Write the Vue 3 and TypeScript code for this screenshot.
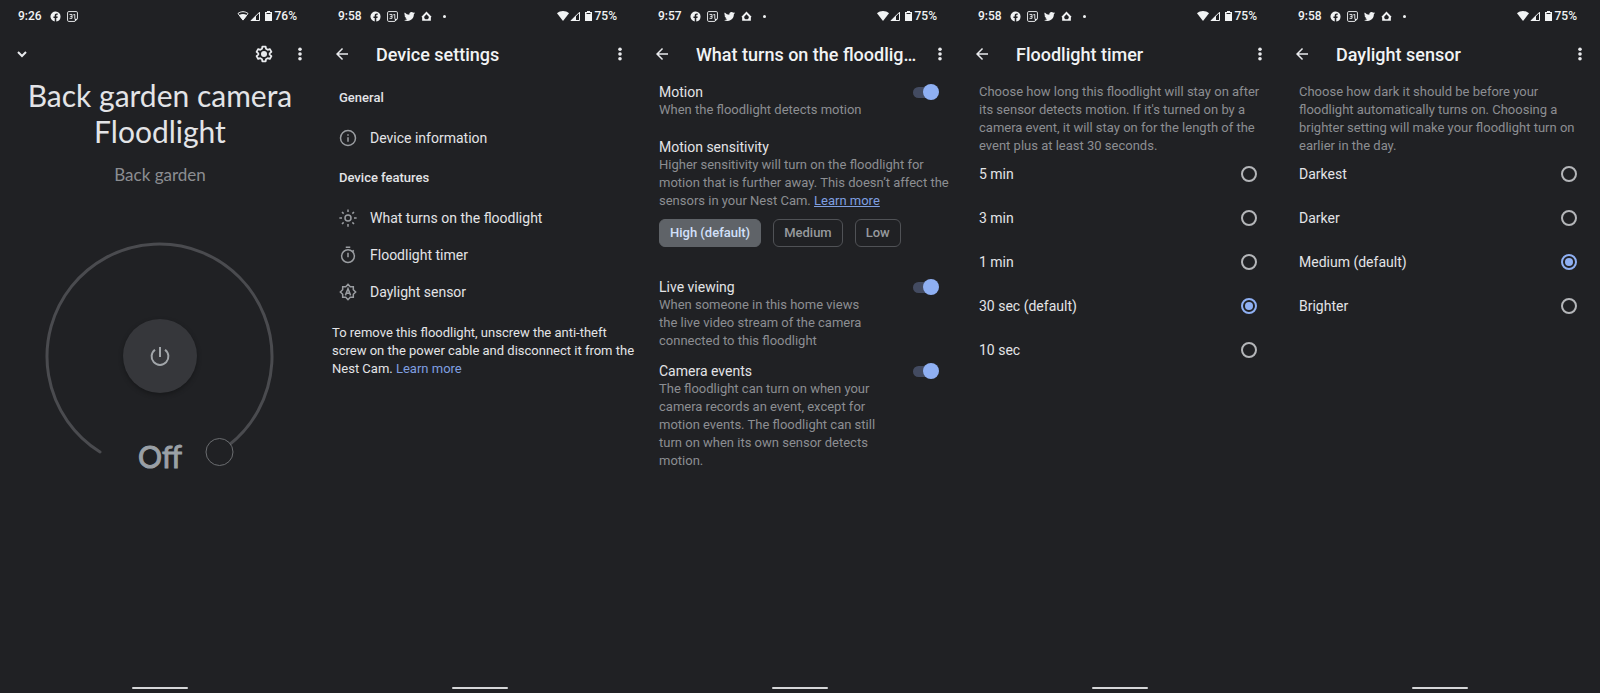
<script setup lang="ts">
import { ref } from 'vue'

type ScreenId = 'dial' | 'settings' | 'triggers' | 'timer' | 'daylight'

interface Screen {
  id: ScreenId
  time: string
  battery: string
  title?: string
  weakWifi?: boolean
}

const screens: Screen[] = [
  { id: 'dial', time: '9:26', battery: '76%', weakWifi: true },
  { id: 'settings', time: '9:58', battery: '75%', title: 'Device settings' },
  { id: 'triggers', time: '9:57', battery: '75%', title: 'What turns on the floodlight' },
  { id: 'timer', time: '9:58', battery: '75%', title: 'Floodlight timer' },
  { id: 'daylight', time: '9:58', battery: '75%', title: 'Daylight sensor' },
]

const brightness = ref(0)
const motion = ref(true)
const liveViewing = ref(true)
const cameraEvents = ref(true)

const sensitivities = ['High (default)', 'Medium', 'Low']
const sensitivity = ref('High (default)')

const timers = ['5 min', '3 min', '1 min', '30 sec (default)', '10 sec']
const timer = ref('30 sec (default)')

const levels = ['Darkest', 'Darker', 'Medium (default)', 'Brighter']
const level = ref('Medium (default)')
</script>

<template>
  <main class="board">
    <section v-for="s in screens" :key="s.id" class="screen">
      <div class="status">
        <span class="clock">{{ s.time }}</span>
        <span class="notices">
          <svg class="notice" viewBox="0 0 24 24" aria-hidden="true">
            <path fill="currentColor" d="M23 12a11 11 0 1 0-12.7 10.9v-7.7H7.500V12h2.800V9.600c0-2.800 1.700-4.300 4.200-4.300 1.200 0 2.400.2 2.400.2v2.700h-1.400c-1.400 0-1.800.8-1.800 1.700V12h3.100l-.5 3.200h-2.600v7.700A11 11 0 0 0 23 12z" />
          </svg>
          <svg class="notice" viewBox="0 0 24 24" aria-hidden="true">
            <path fill="none" stroke="currentColor" stroke-width="2" d="M4 1.200h16a2.800 2.800 0 0 1 2.800 2.800v13l-5.800 5.800H4A2.800 2.800 0 0 1 1.200 20V4A2.800 2.800 0 0 1 4 1.200z" />
            <path fill="currentColor" d="M23 17h-6v6z" />
            <path fill="none" stroke="currentColor" stroke-width="2" d="M5.500 7.500h5.500v8.500H5.500M7 11.800h4M13.500 8.500L17 7.500V17" />
          </svg>
          <template v-if="s.id !== 'dial'">
            <svg class="notice" viewBox="0 0 24 24" aria-hidden="true">
              <path fill="currentColor" d="M24 4.600a10 10 0 0 1-2.800.8 5 5 0 0 0 2.100-2.700 10 10 0 0 1-3.100 1.200 4.900 4.900 0 0 0-8.400 4.500A14 14 0 0 1 1.700 3.100a4.900 4.900 0 0 0 1.500 6.600 5 5 0 0 1-2.200-.6 4.900 4.900 0 0 0 3.900 4.900 5 5 0 0 1-2.200.1 4.900 4.900 0 0 0 4.600 3.400A9.900 9.900 0 0 1 0 19.500a14 14 0 0 0 21.500-12.400A10 10 0 0 0 24 4.600z" />
            </svg>
            <svg class="notice" viewBox="0 0 24 24" aria-hidden="true">
              <path fill="currentColor" fill-rule="evenodd" d="M12 1L23 12.500 21.500 14V21.500H2.500V14L1 12.500zM12 7L7 12.500V14a5 5 0 0 0 2.500 4h5A5 5 0 0 0 17 14v-1.500z" />
            </svg>
            <span class="more-dot"></span>
          </template>
        </span>
        <span class="signals">
          <svg class="wifi" viewBox="0 0 24 20" aria-hidden="true">
            <path v-if="!s.weakWifi" fill="currentColor" d="M12 20L0 4.500C3.500 1.700 7.500 0 12 0s8.500 1.700 12 4.500z" />
            <template v-else>
              <path fill="none" stroke="currentColor" stroke-width="2" d="M12 18L2 5c3-2.400 6.500-3.600 10-3.600S19 2.600 22 5z" />
              <path fill="currentColor" d="M12 19L4 8.500c5-3.500 11-3.500 16 0z" />
            </template>
          </svg>
          <svg class="cell" viewBox="0 0 20 20" aria-hidden="true">
            <path fill="none" stroke="currentColor" stroke-width="2" d="M2.500 19H19V2.500z" />
            <path fill="currentColor" d="M1 20h11V9z" />
          </svg>
          <svg class="battery" viewBox="0 0 14 20" aria-hidden="true">
            <path fill="currentColor" d="M4 0h6v2h4v18H0V2h4z" />
            <path fill="#202124" d="M3 4h8v2H3z" />
          </svg>
          <span>{{ s.battery }}</span>
        </span>
      </div>

      <header class="bar">
        <button class="icon-button" type="button" :aria-label="s.title ? 'Back' : 'Close'">
          <svg v-if="s.title" viewBox="0 0 24 24" class="arrow" aria-hidden="true">
            <path fill="currentColor" d="M20 11H7.830l5.590-5.590L12 4l-8 8 8 8 1.410-1.410L7.830 13H20v-2z" />
          </svg>
          <svg v-else viewBox="0 0 12 12" class="chevron" aria-hidden="true">
            <path fill="none" stroke="currentColor" stroke-width="2" d="M2 4l4 4 4-4" />
          </svg>
        </button>
        <h1 v-if="s.title" class="title">{{ s.title }}</h1>
        <button v-else class="icon-button gear" type="button" aria-label="Settings">
          <svg viewBox="0 0 24 24" aria-hidden="true">
            <path fill="none" stroke="currentColor" stroke-width="2.400" stroke-linejoin="round" d="M9.800 2.200h4.400l.5 2.900 2.200 1.300 2.800-1 2.200 3.800-2.300 1.900v1.800l2.300 1.900-2.200 3.800-2.800-1-2.200 1.300-.5 2.900H9.800l-.5-2.900-2.200-1.300-2.800 1-2.200-3.800 2.300-1.900v-1.800L2.100 9.200l2.200-3.800 2.800 1 2.200-1.300z" />
            <circle cx="12" cy="12" r="4" fill="currentColor" />
          </svg>
        </button>
        <button class="icon-button dots" type="button" aria-label="More options">
          <svg viewBox="0 0 4 14" aria-hidden="true">
            <circle cx="2" cy="2.200" r="1.800" fill="currentColor" />
            <circle cx="2" cy="7" r="1.800" fill="currentColor" />
            <circle cx="2" cy="11.800" r="1.800" fill="currentColor" />
          </svg>
        </button>
      </header>

      <div v-if="s.id === 'dial'" class="dial-page">
        <h1 class="device">Back garden camera Floodlight</h1>
        <p class="room">Back garden</p>
        <div class="dial">
          <svg class="track" viewBox="0 0 230 228" aria-hidden="true">
            <path fill="none" stroke="#4a4b4f" stroke-width="3" stroke-linecap="round" d="M55 210A112.500 112.500 0 1 1 184 203" />
            <circle cx="174.500" cy="210" r="13.500" fill="#202124" stroke="#6b6d70" stroke-width="1" />
          </svg>
          <button class="power" type="button" aria-label="Turn on">
            <svg viewBox="0 0 20 20" aria-hidden="true">
              <path fill="none" stroke="currentColor" stroke-width="2" d="M10 1v10M5 3.800a8.400 8.400 0 1 0 10 0" />
            </svg>
          </button>
          <output class="state">{{ brightness > 0 ? brightness + '%' : 'Off' }}</output>
          <input v-model.number="brightness" class="slider" type="range" min="0" max="100" aria-label="Brightness" />
        </div>
      </div>

      <div v-else-if="s.id === 'settings'" class="settings">
        <h2 class="group">General</h2>
        <a class="item" href="#information">
          <svg viewBox="0 0 24 24" aria-hidden="true">
            <circle cx="12" cy="12" r="10" fill="none" stroke="currentColor" stroke-width="2" />
            <path fill="currentColor" d="M11 7h2v2h-2zM11 11h2v6h-2z" />
          </svg>
          Device information
        </a>
        <h2 class="group">Device features</h2>
        <a class="item" href="#triggers">
          <svg viewBox="0 0 24 24" aria-hidden="true">
            <g fill="none" stroke="currentColor" stroke-width="2">
              <circle cx="12" cy="12" r="4" />
              <path d="M12 0.500v3.500M12 20v3.500M0.500 12h3.500M20 12h3.500M4 4l2.200 2.200M17.800 17.800L20 20M20 4l-2.200 2.200M6.200 17.800L4 20" />
            </g>
          </svg>
          What turns on the floodlight
        </a>
        <a class="item" href="#timer">
          <svg viewBox="0 0 24 24" aria-hidden="true">
            <g fill="none" stroke="currentColor" stroke-width="2">
              <circle cx="12" cy="13.500" r="8.500" />
              <path d="M9 1.500h6M12 9v6M18 7.500l1.700-1.700" />
            </g>
          </svg>
          Floodlight timer
        </a>
        <a class="item" href="#daylight">
          <svg viewBox="0 0 24 24" aria-hidden="true">
            <g fill="none" stroke="currentColor" stroke-width="2">
              <path d="M12 1.800L15 4.900h4.100V9l3.100 3-3.100 3v4.100H15l-3 3.100-3-3.100H4.900V15l-3.100-3 3.100-3V4.900H9z" />
              <path d="M8.500 16.500L12 7.500l3.500 9M9.800 13.800h4.400" />
            </g>
          </svg>
          Daylight sensor
        </a>
        <p class="removal">
          To remove this floodlight, unscrew the anti-theft screw on the power cable and disconnect it from the Nest Cam.
          <a href="#removal">Learn more</a>
        </p>
      </div>

      <div v-else-if="s.id === 'triggers'" class="triggers">
        <div class="trigger">
          <div class="copy">
            <label class="name" for="motion">Motion</label>
            <p class="hint">When the floodlight detects motion</p>
          </div>
          <input id="motion" v-model="motion" class="switch" type="checkbox" />
        </div>
        <fieldset class="sensitivity">
          <legend class="name">Motion sensitivity</legend>
          <p class="hint">
            Higher sensitivity will turn on the floodlight for motion that is further away. This doesn’t affect the
            sensors in your Nest Cam. <a class="underlined" href="#sensitivity">Learn more</a>
          </p>
          <div class="chips">
            <button
              v-for="option in sensitivities"
              :key="option"
              type="button"
              class="chip"
              :class="{ chosen: option === sensitivity }"
              :aria-pressed="option === sensitivity"
              @click="sensitivity = option"
            >{{ option }}</button>
          </div>
        </fieldset>
        <div class="trigger">
          <div class="copy">
            <label class="name" for="live">Live viewing</label>
            <p class="hint">When someone in this home views the live video stream of the camera connected to this floodlight</p>
          </div>
          <input id="live" v-model="liveViewing" class="switch" type="checkbox" />
        </div>
        <div class="trigger events">
          <div class="copy">
            <label class="name" for="events">Camera events</label>
            <p class="hint">The floodlight can turn on when your camera records an event, except for motion events. The floodlight can still turn on when its own sensor detects motion.</p>
          </div>
          <input id="events" v-model="cameraEvents" class="switch" type="checkbox" />
        </div>
      </div>

      <div v-else-if="s.id === 'timer'" class="choices">
        <p class="hint">Choose how long this floodlight will stay on after its sensor detects motion. If it's turned on by a camera event, it will stay on for the length of the event plus at least 30 seconds.</p>
        <div class="options">
          <label v-for="option in timers" :key="option" class="option">
            {{ option }}
            <input v-model="timer" class="radio" type="radio" name="timer" :value="option" />
          </label>
        </div>
      </div>

      <div v-else class="choices">
        <p class="hint">Choose how dark it should be before your floodlight automatically turns on. Choosing a brighter setting will make your floodlight turn on earlier in the day.</p>
        <div class="options">
          <label v-for="option in levels" :key="option" class="option">
            {{ option }}
            <input v-model="level" class="radio" type="radio" name="level" :value="option" />
          </label>
        </div>
      </div>

      <div class="home-bar"></div>
    </section>
  </main>
</template>

<style>
body {
  margin: 0;
  background: #202124;
}
</style>

<style scoped>
.board {
  display: grid;
  grid-template-columns: repeat(5, 1fr);
  min-height: 100vh;
  background: #202124;
  color: #e3e4e7;
  font-family: Roboto, 'Liberation Sans', sans-serif;
  font-size: 14px;
  line-height: 18px;
}

.screen {
  display: flex;
  flex-direction: column;
  min-width: 0;
}

h1,
h2,
p {
  margin: 0;
}

a {
  color: #7f9fe0;
  text-decoration: none;
}

/* status strip */
.status {
  display: flex;
  align-items: center;
  height: 32px;
  padding: 0 23px 0 18px;
  color: #f1f3f4;
  font-size: 12px;
  font-weight: 500;
}

.clock {
  width: 32px;
}

.notices {
  display: flex;
  flex: 1;
  align-items: center;
  gap: 6px;
}

.notice {
  width: 11px;
  height: 11px;
}

.more-dot {
  width: 3px;
  height: 3px;
  margin-left: 5px;
  border-radius: 50%;
  background: currentColor;
}

.signals {
  display: flex;
  align-items: center;
  gap: 1px;
}

.wifi {
  width: 12px;
  height: 10px;
}

.cell {
  width: 10px;
  height: 10px;
}

.battery {
  width: 7px;
  height: 10px;
  margin: 0 2px 0 4px;
}

/* app bar */
.bar {
  display: flex;
  align-items: center;
  height: 44px;
  padding: 0 18px 0 13px;
}

.icon-button {
  display: flex;
  flex: none;
  align-items: center;
  padding: 0;
  border: 0;
  background: none;
  color: #e8eaed;
  cursor: pointer;
}

.arrow {
  width: 18px;
  height: 18px;
  margin-right: 25px;
}

.chevron {
  width: 12px;
  height: 12px;
  margin-left: 3px;
}

.gear {
  margin: 0 25px 0 auto;
}

.gear svg {
  width: 18px;
  height: 18px;
}

.title {
  flex: 1;
  overflow: hidden;
  margin-right: 20px;
  padding-top: 2px;
  color: #f1f3f4;
  font-size: 18px;
  font-weight: 500;
  line-height: 24px;
  text-overflow: ellipsis;
  white-space: nowrap;
}

.dots svg {
  width: 4px;
  height: 14px;
}

/* dial */
.dial-page {
  display: flex;
  flex-direction: column;
  align-items: center;
  font-family: Lato, Roboto, sans-serif;
  text-align: center;
}

.device {
  max-width: 290px;
  margin-top: 1px;
  font-size: 30px;
  font-weight: 400;
  line-height: 36px;
}

.room {
  margin-top: 16px;
  color: #8b8d91;
  font-size: 17px;
  line-height: 20px;
}

.dial {
  display: grid;
  grid-template-rows: 228px;
  justify-items: center;
  margin-top: 57px;
}

.dial > * {
  grid-area: 1 / 1;
}

.track {
  width: 230px;
  height: 228px;
}

.power {
  display: flex;
  align-items: center;
  justify-content: center;
  align-self: start;
  width: 74px;
  height: 74px;
  margin-top: 77px;
  padding: 0;
  border: 0;
  border-radius: 50%;
  background: #36373b;
  box-shadow: 0 2px 4px #17181a;
  color: #a2a6aa;
  cursor: pointer;
}

.power svg {
  width: 20px;
  height: 20px;
}

.state {
  align-self: end;
  color: #9aa0a6;
  font-size: 30px;
  line-height: 28px;
  -webkit-text-stroke: 1px #9aa0a6;
}

.slider {
  align-self: end;
  width: 120px;
  margin: 0;
  opacity: 0;
}

/* device settings */
.settings {
  padding: 13px 4px 0 12px;
}

.group {
  padding: 0 7px;
  font-size: 13px;
  font-weight: 500;
  line-height: 18px;
}

.item {
  display: flex;
  align-items: center;
  gap: 13px;
  height: 37px;
  padding: 0 7px;
  color: #e3e4e7;
  font-size: 14px;
}

.item svg {
  width: 18px;
  height: 18px;
  color: #9a9da1;
}

.group + .item {
  margin-top: 12px;
}

.item + .group {
  margin-top: 13px;
}

.removal {
  margin-top: 14px;
  font-size: 13px;
}

/* triggers */
.triggers {
  padding: 7px 4px 0 19px;
}

.trigger {
  display: flex;
  align-items: flex-start;
  justify-content: space-between;
}

.trigger.events {
  margin-top: 12px;
}

.copy {
  max-width: 218px;
}

.name {
  display: block;
  padding: 0;
  font-size: 14px;
  line-height: 18px;
}

.hint {
  color: #8c8e92;
  font-size: 13px;
  line-height: 18px;
}

.sensitivity {
  margin: 19px 0 31px;
  padding: 0;
  border: 0;
}

.underlined {
  text-decoration: underline;
}

.chips {
  display: flex;
  gap: 12px;
  margin-top: 9px;
}

.chip {
  height: 28px;
  padding: 0 10px;
  border: 1px solid #505256;
  border-radius: 6px;
  background: none;
  color: #96999d;
  font: 500 13px/18px Roboto, 'Liberation Sans', sans-serif;
  cursor: pointer;
}

.chip.chosen {
  border-color: #5f6368;
  background: #5f6368;
  color: #d2e0fa;
}

.switch {
  display: grid;
  align-items: center;
  justify-items: end;
  width: 26px;
  height: 16px;
  margin: 1px 17px 0 0;
  appearance: none;
  cursor: pointer;
}

.switch::before,
.switch::after {
  grid-area: 1 / 1;
  content: '';
}

.switch::before {
  justify-self: start;
  width: 22px;
  height: 11px;
  border-radius: 6px;
  background: #434b61;
}

.switch::after {
  width: 16px;
  height: 16px;
  border-radius: 50%;
  background: #8fb0f3;
}

.switch:not(:checked)::after {
  justify-self: start;
  background: #9aa0a6;
}

/* single-choice pages */
.choices {
  padding: 7px 13px 0 19px;
}

.options {
  display: flex;
  flex-direction: column;
  gap: 12px;
  margin-top: 3px;
  padding-right: 10px;
}

.option {
  display: flex;
  align-items: center;
  justify-content: space-between;
  height: 32px;
  font-size: 14px;
  cursor: pointer;
}

.radio {
  display: grid;
  place-items: center;
  width: 16px;
  height: 16px;
  margin: 0;
  appearance: none;
  border: 2px solid #b4b6b9;
  border-radius: 50%;
  cursor: pointer;
}

.radio:checked {
  border-color: #8fb0f3;
}

.radio:checked::before {
  width: 8px;
  height: 8px;
  border-radius: 50%;
  background: #8fb0f3;
  content: '';
}

.home-bar {
  width: 56px;
  height: 2px;
  margin: auto auto 4px;
  border-radius: 1px;
  background: #d5d6d8;
}
</style>
